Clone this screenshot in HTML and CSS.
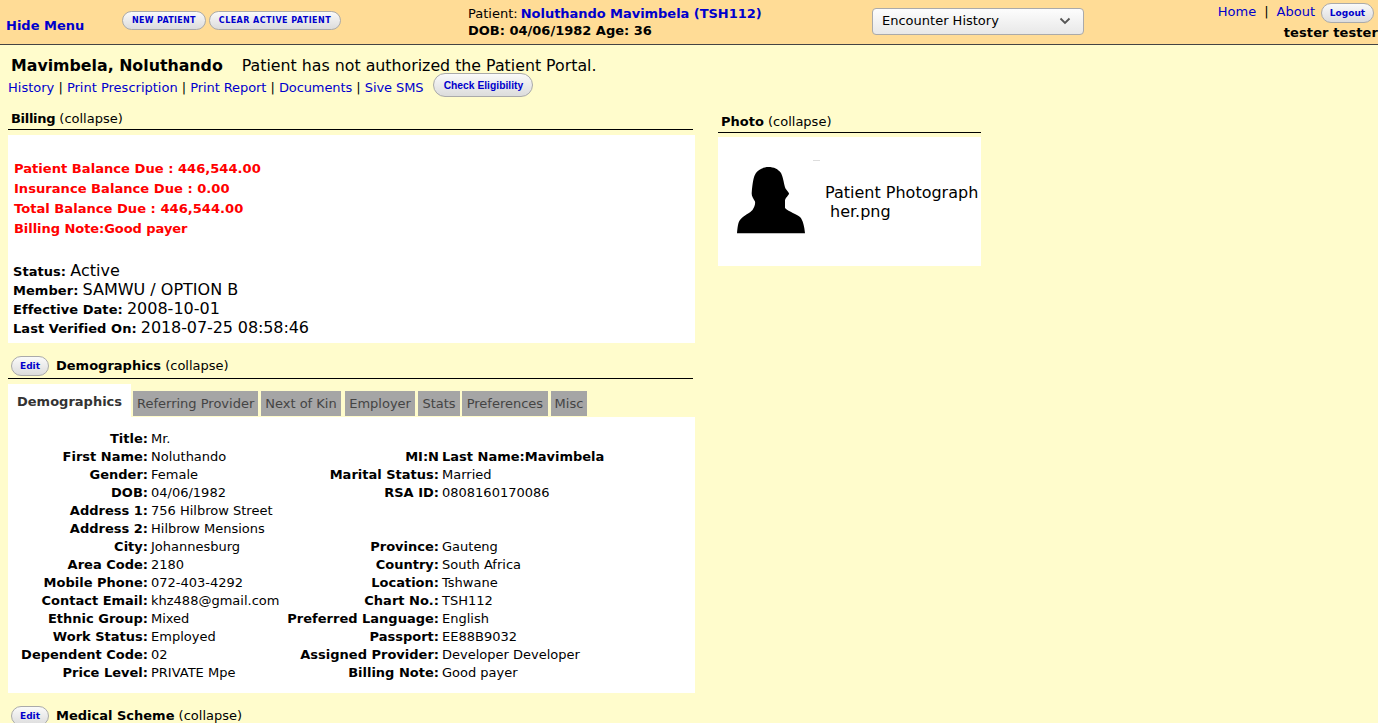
FILE: index.html
```html
<!DOCTYPE html>
<html>
<head>
    <title>Patient Dashboard</title>
    <link rel="stylesheet" href="styles.css">
</head>
<body>
    <div class="topbar">
        <div class="hide-col"><a class="nav-strong" href="#">Hide Menu</a></div>
        <div class="btn-col">
            <a class="pill pill-caps" href="#">New Patient</a>
            <a class="pill pill-caps pill-clear" href="#">Clear Active Patient</a>
        </div>
        <div class="patient-col">
            <div>Patient: <a class="nav-strong patient-link" href="#">Noluthando Mavimbela (TSH112)</a></div>
            <div class="patient-dob">DOB: 04/06/1982 Age: 36</div>
        </div>
        <div class="encounter">
            <span>Encounter History</span>
            <svg class="chevron" width="12" height="8" viewBox="0 0 12 8"><path d="M1.5 1.5 L6 6 L10.5 1.5" fill="none" stroke="#555" stroke-width="1.8"/></svg>
        </div>
        <div class="user-col">
            <div class="user-links">
                <a href="#">Home</a><span class="sep">|</span><a href="#">About</a>
                <a class="pill pill-logout" href="#">Logout</a>
            </div>
            <div class="user-name">tester tester</div>
        </div>
    </div>

    <div class="page">
        <div class="patient-title">
            <span class="patient-name">Mavimbela, Noluthando</span>
            <span class="portal-note">Patient has not authorized the Patient Portal.</span>
        </div>
        <div class="patient-links">
            <div class="link-list">
                <a href="#">History</a> | <a href="#">Print Prescription</a> | <a class="link-tight" href="#">Print Report</a> | <a class="link-tight" href="#">Documents</a> | <a class="link-tight" href="#">Sive SMS</a>
            </div>
            <a class="pill pill-check" href="#">Check Eligibility</a>
        </div>

        <div class="columns">
            <div class="left-col">
                <div class="section-head billing-head"><b>Billing</b> (collapse)</div>
                <div class="box billing-box">
                    <div class="balance">Patient Balance Due : 446,544.00</div>
                    <div class="balance">Insurance Balance Due : 0.00</div>
                    <div class="balance">Total Balance Due : 446,544.00</div>
                    <div class="balance balance-note">Billing Note:Good payer</div>
                    <div class="ins first-ins"><b>Status:</b> <span>Active</span></div>
                    <div class="ins"><b>Member:</b> <span>SAMWU / OPTION B</span></div>
                    <div class="ins"><b>Effective Date:</b> <span>2008-10-01</span></div>
                    <div class="ins ins-last"><b>Last Verified On:</b> <span>2018-07-25 08:58:46</span></div>
                </div>

                <div class="section-head demo-head">
                    <a class="pill pill-edit" href="#">Edit</a>
                    <span><b>Demographics</b> (collapse)</span>
                </div>
                <div class="tabs">
                    <div class="tab tab-active">Demographics</div>
                    <div class="tab">Referring Provider</div>
                    <div class="tab">Next of Kin</div>
                    <div class="tab tab-employer">Employer</div>
                    <div class="tab">Stats</div>
                    <div class="tab tab-prefs">Preferences</div>
                    <div class="tab">Misc</div>
                </div>
                <div class="box demo-box">
                    <table class="demo-table">
                        <tr><td class="lbl">Title:</td><td class="val">Mr.</td><td class="lbl"></td><td class="val"></td></tr>
                        <tr><td class="lbl">First Name:</td><td class="val">Noluthando</td><td class="lbl">MI:N</td><td class="val"><b>Last Name:Mavimbela</b></td></tr>
                        <tr><td class="lbl">Gender:</td><td class="val">Female</td><td class="lbl">Marital Status:</td><td class="val">Married</td></tr>
                        <tr><td class="lbl">DOB:</td><td class="val">04/06/1982</td><td class="lbl">RSA ID:</td><td class="val">0808160170086</td></tr>
                        <tr><td class="lbl">Address 1:</td><td class="val">756 Hilbrow Street</td><td class="lbl"></td><td class="val"></td></tr>
                        <tr><td class="lbl">Address 2:</td><td class="val">Hilbrow Mensions</td><td class="lbl"></td><td class="val"></td></tr>
                        <tr><td class="lbl">City:</td><td class="val">Johannesburg</td><td class="lbl">Province:</td><td class="val">Gauteng</td></tr>
                        <tr><td class="lbl">Area Code:</td><td class="val">2180</td><td class="lbl">Country:</td><td class="val">South Africa</td></tr>
                        <tr><td class="lbl">Mobile Phone:</td><td class="val">072-403-4292</td><td class="lbl">Location:</td><td class="val">Tshwane</td></tr>
                        <tr><td class="lbl">Contact Email:</td><td class="val">khz488@gmail.com</td><td class="lbl">Chart No.:</td><td class="val">TSH112</td></tr>
                        <tr><td class="lbl">Ethnic Group:</td><td class="val">Mixed</td><td class="lbl">Preferred Language:</td><td class="val">English</td></tr>
                        <tr><td class="lbl">Work Status:</td><td class="val">Employed</td><td class="lbl">Passport:</td><td class="val">EE88B9032</td></tr>
                        <tr><td class="lbl">Dependent Code:</td><td class="val">02</td><td class="lbl">Assigned Provider:</td><td class="val">Developer Developer</td></tr>
                        <tr><td class="lbl">Price Level:</td><td class="val">PRIVATE Mpe</td><td class="lbl">Billing Note:</td><td class="val">Good payer</td></tr>
                    </table>
                </div>

                <div class="section-head demo-head scheme-head">
                    <a class="pill pill-edit" href="#">Edit</a>
                    <span><b>Medical Scheme</b> (collapse)</span>
                </div>
            </div>

            <div class="right-col">
                <div class="section-head photo-head"><b>Photo</b> (collapse)</div>
                <div class="photo-box">
                    <svg class="photo-img" width="84" height="74" viewBox="0 0 84 74">
                        <path d="M76 .5H83" stroke="#ddd" stroke-width="1"/>
                        <path fill="#000" d="M31.3 7 C37 7 41 9 44 13 C46.5 18 47 25 48.5 28.5 C50 31 52.5 33 52 34 C51 36 49 37 48 40 L48 48 C52 52 60 54 63 57 C66 60 67.5 67 68 73.3 L0 73.3 C.5 68 1 62 3 60 C7 55 13 53 15.5 50 C17.5 47 18.5 44 18 41.5 C16 38 14.5 36 14.7 33 C15 28 15.5 24 16.3 20 C17.5 14 20 11 23 9.5 C25.5 8 28 7 31.3 7 Z"/>
                    </svg>
                    <div class="photo-text">
                        <div>Patient Photograph</div>
                        <div class="photo-file">her.png</div>
                    </div>
                </div>
            </div>
        </div>
    </div>
</body>
</html>
```

FILE: styles.css
```css
html, body {
    margin: 0;
    height: 723px;
    overflow: hidden;
}
body {
    background-color: #fffccc;
    color: #000;
    font-family: "DejaVu Sans", sans-serif;
    font-size: 13px;
}
a {
    color: #0000cc;
    text-decoration: none;
}
b {
    font-weight: bold;
}

/* top bar */
.topbar {
    display: flex;
    height: 44px;
    background-color: #ffdc96;
    border-bottom: 1px solid #444;
}
.hide-col {
    width: 116px;
    padding: 18px 0 0 6px;
    box-sizing: content-box;
}
.nav-strong {
    font-weight: bold;
}
.btn-col {
    width: 346px;
    display: flex;
    align-items: flex-start;
    gap: 3px;
    padding-top: 11px;
}
.patient-col {
    width: 404px;
    padding-top: 5px;
    line-height: 17px;
}
.patient-link {
    letter-spacing: -.04px;
    margin-left: -1px;
}
.patient-dob {
    font-weight: bold;
}
.encounter {
    width: 212px;
    height: 27px;
    margin-top: 8px;
    box-sizing: border-box;
    display: flex;
    align-items: center;
    justify-content: space-between;
    padding: 0 12px 2px 9px;
    background: linear-gradient(#fdfdfd, #e8e8e8);
    border: 1px solid #aaa;
    border-radius: 4px;
}
.user-col {
    flex: 1;
    text-align: right;
    padding-top: 3px;
}
.user-links {
    display: flex;
    justify-content: flex-end;
    align-items: flex-start;
    line-height: 17px;
    padding-right: 4px;
}
.sep {
    margin: 0 8px;
}
.user-name {
    font-weight: bold;
    letter-spacing: .1px;
    margin-top: 2px;
}

/* buttons */
.pill {
    display: inline-block;
    box-sizing: border-box;
    background: linear-gradient(#fafafa, #dcdcdc);
    border: 1px solid #aaa;
    border-radius: 10px;
    font-weight: bold;
    color: #0000cc;
    text-align: center;
}
.pill-caps {
    height: 19px;
    line-height: 17px;
    padding: 0 9px;
    font-size: 8px;
    text-transform: uppercase;
    letter-spacing: .3px;
}
.pill-clear {
    letter-spacing: .45px;
}
.pill-logout {
    width: 53px;
    height: 20px;
    line-height: 19px;
    margin-left: 6px;
    font-size: 9px;
}
.pill-check {
    width: 100px;
    height: 24px;
    line-height: 23px;
    margin: -2px 0 0 10px;
    border-radius: 12px;
    font-family: "Liberation Sans", sans-serif;
    font-size: 10.3px;
}
.pill-edit {
    width: 38px;
    height: 20px;
    line-height: 19px;
    font-size: 9px;
    flex-shrink: 0;
}

/* patient heading */
.page {
    padding: 0 0 0 8px;
}
.patient-title {
    padding: 11px 0 0 3px;
    font-size: 15.8px;
    line-height: 19px;
}
.patient-name {
    font-weight: bold;
    margin-right: 14px;
}
.patient-links {
    display: flex;
    align-items: flex-start;
    height: 29px;
}
.link-list {
    line-height: 26px;
}
.link-tight {
    letter-spacing: -.1px;
}

.columns {
    display: flex;
}
.left-col {
    width: 687px;
}
.right-col {
    width: 263px;
    margin-left: 23px;
}

/* sections */
.section-head {
    width: 685px;
    border-bottom: 1px solid #000;
    padding-left: 3px;
    box-sizing: border-box;
    line-height: 16px;
}
.billing-head {
    padding-top: 7px;
    padding-bottom: 2px;
}
.billing-head b {
    letter-spacing: -.3px;
}
.demo-head {
    display: flex;
    align-items: center;
    gap: 7px;
    margin-top: 13px;
    padding-bottom: 2px;
}
.scheme-head {
    border-bottom: 0;
}
.box {
    background-color: #fff;
    width: 687px;
}
.billing-box {
    margin-top: 5px;
    height: 208px;
    box-sizing: border-box;
    padding: 24px 0 0 6px;
}
.balance {
    color: #f00;
    font-size: 13.1px;
    font-weight: bold;
    line-height: 20px;
}
.balance-note {
    font-size: 13px;
    letter-spacing: -.05px;
}
.ins {
    height: 19px;
    line-height: 19px;
    margin-left: -1px;
}
.ins b {
    letter-spacing: .05px;
}
.ins span {
    font-size: 16px;
}
.ins-last span {
    letter-spacing: -.1px;
}
.first-ins {
    margin-top: 22px;
}

/* tabs */
.tabs {
    display: flex;
    gap: 3px;
    margin-top: 5px;
    height: 33px;
}
.tab {
    background-color: #a5a5a5;
    color: #444;
    padding: 0 4px;
    height: 25px;
    line-height: 25px;
    margin-top: 7px;
}
.tab-employer {
    margin-left: 1px;
    padding: 0 4.5px;
}
.tab-prefs {
    margin-left: -.5px;
    padding: 0 4.5px;
}
.tab-active {
    background-color: #fff;
    color: #333;
    font-weight: bold;
    width: 123px;
    box-sizing: border-box;
    height: 33px;
    margin-top: 0;
    padding: 0 0 0 9px;
    line-height: 35px;
    margin-right: -1px;
}
.demo-box {
    height: 276px;
    box-sizing: border-box;
    padding-top: 13px;
}
.demo-table {
    border-collapse: collapse;
    table-layout: fixed;
    width: 687px;
}
.demo-table td {
    padding: 0;
    height: 18px;
    line-height: 18px;
    white-space: nowrap;
}
.demo-table .lbl {
    font-weight: bold;
    text-align: right;
    padding-right: 3px;
}
.demo-table tr td:nth-child(1) {
    width: 140px;
}
.demo-table tr td:nth-child(2) {
    width: 134px;
}
.demo-table tr td:nth-child(3) {
    width: 154px;
}

/* photo */
.photo-head {
    width: 263px;
    padding-top: 10px;
    padding-bottom: 2px;
}
.photo-box {
    margin-top: 4px;
    background-color: #fff;
    height: 129px;
    display: flex;
    align-items: flex-start;
    padding: 23px 0 0 19px;
    box-sizing: border-box;
}
.photo-img {
    flex-shrink: 0;
}
.photo-text {
    font-size: 16px;
    line-height: 19px;
    margin: 23px 0 0 4px;
    white-space: nowrap;
}
.photo-file {
    padding-left: 5px;
}
```
